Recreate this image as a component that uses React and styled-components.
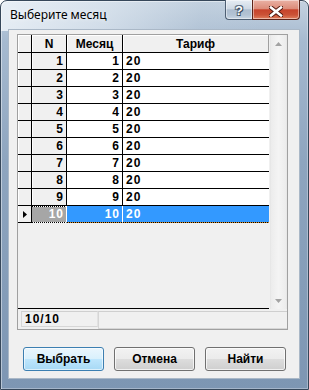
import React from "react";
import styled, { createGlobalStyle } from "styled-components";

const Global = createGlobalStyle`
  html, body { margin: 0; padding: 0; background: #ffffff; }
  body { font-family: "Liberation Sans", Arial, sans-serif; }
  * { box-sizing: border-box; }
`;

const Window = styled.div`
  width: 309px;
  height: 390px;
  display: flex;
  flex-direction: column;
  border: 1px solid #36475a;
  border-radius: 7px 7px 0 0;
  padding: 0 8px 10px 7px;
  background:
    linear-gradient(100deg, rgba(236, 242, 248, 0.9) 0%, rgba(222, 231, 240, 0.7) 35%, rgba(190, 205, 220, 0.3) 65%, rgba(170, 188, 208, 0) 85%) top left / 100% 30px no-repeat,
    linear-gradient(180deg, #c4d2e0 0px, #a6bad0 40px, #8ea5bf 160px, #7d96b3 390px);
  box-shadow: inset 1px 1px 0 rgba(255, 255, 255, 0.45), inset -1px -1px 0 rgba(255, 255, 255, 0.3);
`;

const TitleBar = styled.div`
  height: 28px;
  flex: none;
  display: flex;
  justify-content: space-between;
  align-items: flex-start;
`;

const Title = styled.div`
  padding: 6px 0 0 2px;
  font-family: "Noto Sans", "Open Sans", sans-serif;
  font-size: 12px;
  line-height: 16px;
  color: #000;
  text-shadow: 0 0 5px rgba(255, 255, 255, 0.9);
`;

const CaptionGroup = styled.div`
  display: flex;
  margin-top: -1px;
`;

const CaptionButton = styled.div`
  height: 20px;
  width: ${(p) => p.$w}px;
  display: flex;
  align-items: center;
  justify-content: center;
  border: 1px solid ${(p) => (p.$close ? "#5d2318" : "#4e5f73")};
  border-top: none;
  border-right: ${(p) => (p.$close ? "1px solid #5d2318" : "none")};
  border-radius: ${(p) => (p.$close ? "0 0 4px 0" : "0 0 0 4px")};
  background: ${(p) =>
    p.$close
      ? "linear-gradient(180deg, #eab2a5 0%, #dc8c7a 45%, #c7432b 52%, #cb5236 78%, #e0805f 100%)"
      : "linear-gradient(180deg, #e6edf4 0%, #cfd9e4 45%, #adbdcf 52%, #b3c3d4 78%, #c9d6e3 100%)"};
  box-shadow: inset 0 0 0 1px rgba(255, 255, 255, 0.45);
`;

const HelpGlyph = styled.span`
  font-family: "Liberation Sans", Arial, sans-serif;
  font-weight: bold;
  font-size: 13px;
  line-height: 13px;
  color: #fff;
  margin-top: 2px;
  text-shadow: 0 0 1px #2d3c4e, 1px 1px 0 #3b4b5e, -1px -1px 0 #6a7c90, 1px -1px 0 #56687c, -1px 1px 0 #56687c;
`;

const Client = styled.div`
  flex: 1;
  display: flex;
  flex-direction: column;
  background: #f0f0f0;
  border: 1px solid #aab8c7;
`;

const GridPanel = styled.div`
  margin: 4px 11px 0 8px;
  height: 296px;
  flex: none;
  border: 1px solid #a0a0a0;
  display: flex;
  flex-direction: column;
  font-family: "Liberation Sans", Arial, sans-serif;
  font-weight: bold;
  font-size: 12px;
  color: #000;
`;

const GridBody = styled.div`
  height: 274px;
  display: flex;
`;

const Table = styled.div`
  width: 251px;
  display: flex;
  flex-direction: column;
  border-bottom: 1px solid #000;
`;

const Row = styled.div`
  display: flex;
  height: ${(p) => (p.$head ? 18 : 17)}px;
  flex: none;
`;

const HeadCell = styled.div`
  width: ${(p) => p.$w}px;
  height: 18px;
  display: flex;
  align-items: center;
  justify-content: center;
  background: #f0f0f0;
  border-right: 1px solid ${(p) => (p.$last ? "#a0a0a0" : "#000")};
  border-bottom: 1px solid #000;
  box-shadow: inset 1px 1px 0 #fff;
`;

const cellBg = (p) => {
  if (p.$sel === "gray") return "#a6a6a6";
  if (p.$sel === "blue") return "#3399ff";
  return p.$fixed ? "#f0f0f0" : "#ffffff";
};

const Cell = styled.div`
  width: ${(p) => p.$w}px;
  height: 17px;
  display: flex;
  align-items: center;
  justify-content: ${(p) => (p.$align === "right" ? "flex-end" : p.$align === "center" ? "center" : "flex-start")};
  padding: ${(p) => (p.$align === "right" ? "0 2px 0 0" : p.$align === "center" ? "0" : "0 0 0 3px")};
  letter-spacing: ${(p) => (p.$num ? "1px" : "0")};
  color: ${(p) => (p.$sel ? "#fff" : "#000")};
  border-right: ${(p) => (p.$last ? "none" : `1px solid ${p.$sel === "blue" || p.$sel === "gray" ? "#fff" : "#000"}`)};
  border-bottom: 1px solid ${(p) => (p.$sel ? "transparent" : "#000")};
  background: ${(p) =>
    p.$sel === "blue"
      ? "repeating-linear-gradient(90deg, #000 0 1px, #d9902a 1px 2px) left bottom / 100% 1px no-repeat, #3399ff"
      : p.$sel === "gray"
      ? "repeating-linear-gradient(90deg, #000 0 1px, #fff 1px 2px) left bottom / 100% 1px no-repeat, repeating-linear-gradient(90deg, #000 0 1px, #fff 1px 2px) left top / 100% 1px no-repeat, #a6a6a6"
      : cellBg(p)};
  background-origin: border-box;
  box-shadow: ${(p) => (p.$fixed && !p.$sel ? "inset 1px 0 0 #fff" : "none")};
`;

const Filler = styled.div`
  flex: 1;
  background: #f0f0f0;
`;

const ScrollBar = styled.div`
  width: 17px;
  margin-left: 1px;
  display: flex;
  flex-direction: column;
  justify-content: space-between;
  background: linear-gradient(90deg, #e2e2e2 0, #ececec 1px, #f4f4f4 50%, #ececec calc(100% - 1px), #e2e2e2 100%);
`;

const ScrollArrow = styled.div`
  height: 17px;
  display: flex;
  align-items: center;
  justify-content: center;
`;

const StatusBar = styled.div`
  height: 20px;
  display: flex;
  align-items: flex-start;
  padding: 2px 0 0 3px;
`;

const StatusField = styled.div`
  width: ${(p) => (p.$grow ? "auto" : "77px")};
  flex: ${(p) => (p.$grow ? 1 : "none")};
  height: ${(p) => (p.$grow ? 18 : 16)}px;
  display: flex;
  align-items: center;
  padding-left: 3px;
  letter-spacing: 1px;
  border: 1px solid #d6d6d6;
  border-top-color: #cfcfcf;
  border-right: ${(p) => (p.$grow ? "none" : "1px solid #e2e2e2")};
`;

const ButtonRow = styled.div`
  display: flex;
  gap: 10px;
  padding-left: 14px;
  margin-top: 17px;
`;

const Button = styled.div`
  width: 81px;
  height: 24px;
  display: flex;
  align-items: center;
  justify-content: center;
  font-family: "Liberation Sans", Arial, sans-serif;
  font-weight: bold;
  font-size: 12px;
  color: #000;
  border-radius: 3px;
  border: 1px solid ${(p) => (p.$primary ? "#3c7fb1" : "#707070")};
  background: ${(p) =>
    p.$primary
      ? "linear-gradient(180deg, #eaf6fd 0%, #d9f0fc 50%, #bee6fd 50%, #a7d9f5 100%)"
      : "linear-gradient(180deg, #f2f2f2 0%, #ebebeb 50%, #dddddd 50%, #cfcfcf 100%)"};
  box-shadow: inset 0 0 0 1px ${(p) => (p.$primary ? "rgba(255,255,255,0.6)" : "rgba(255,255,255,0.7)")};
`;

const COLS = [14, 35, 56, 146];

const rows = Array.from({ length: 10 }, (_, i) => ({ n: i + 1, m: i + 1, t: 20 }));

export default function App() {
  return (
    <>
      <Global />
      <Window>
        <TitleBar>
          <Title>Выберите месяц</Title>
          <CaptionGroup>
            <CaptionButton $w={27}>
              <HelpGlyph>?</HelpGlyph>
            </CaptionButton>
            <CaptionButton $w={48} $close>
              <svg width="14" height="11" viewBox="0 0 14 11" style={{ marginTop: 3 }}>
                <path d="M2 1.5 L12 9.5 M12 1.5 L2 9.5" stroke="#4a140b" strokeWidth="4.4" strokeLinecap="square" />
                <path d="M2 1.5 L12 9.5 M12 1.5 L2 9.5" stroke="#ffffff" strokeWidth="2.6" strokeLinecap="square" />
              </svg>
            </CaptionButton>
          </CaptionGroup>
        </TitleBar>
        <Client>
          <GridPanel>
            <GridBody>
              <Table>
                <Row $head>
                  <HeadCell $w={COLS[0]} />
                  <HeadCell $w={COLS[1]}>N</HeadCell>
                  <HeadCell $w={COLS[2]}>Месяц</HeadCell>
                  <HeadCell $w={COLS[3]} $last>Тариф</HeadCell>
                </Row>
                {rows.map((r, i) => {
                  const sel = i === rows.length - 1;
                  return (
                    <Row key={r.n}>
                      <Cell $w={COLS[0]} $fixed $align="center">
                        {sel && (
                          <svg width="4" height="7" viewBox="0 0 4 7">
                            <polygon points="0,0 4,3.5 0,7" fill="#000" />
                          </svg>
                        )}
                      </Cell>
                      <Cell $w={COLS[1]} $fixed $align="right" $num $sel={sel ? "gray" : undefined}>
                        {r.n}
                      </Cell>
                      <Cell $w={COLS[2]} $align="right" $num $sel={sel ? "blue" : undefined}>
                        {r.m}
                      </Cell>
                      <Cell $w={COLS[3]} $last $num $sel={sel ? "blue" : undefined}>
                        {r.t}
                      </Cell>
                    </Row>
                  );
                })}
                <Filler />
              </Table>
              <ScrollBar>
                <ScrollArrow>
                  <svg width="7" height="4" viewBox="0 0 7 4">
                    <polygon points="0,4 3.5,0 7,4" fill="#a3a3a3" />
                  </svg>
                </ScrollArrow>
                <ScrollArrow>
                  <svg width="7" height="4" viewBox="0 0 7 4">
                    <polygon points="0,0 7,0 3.5,4" fill="#a3a3a3" />
                  </svg>
                </ScrollArrow>
              </ScrollBar>
            </GridBody>
            <StatusBar>
              <StatusField>10/10</StatusField>
              <StatusField $grow />
            </StatusBar>
          </GridPanel>
          <ButtonRow>
            <Button $primary>Выбрать</Button>
            <Button>Отмена</Button>
            <Button>Найти</Button>
          </ButtonRow>
        </Client>
      </Window>
    </>
  );
}
